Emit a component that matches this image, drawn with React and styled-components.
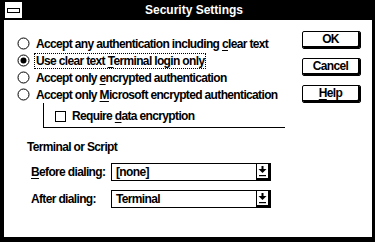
import React from 'react';
import styled, { createGlobalStyle } from 'styled-components';

const GlobalStyle = createGlobalStyle`
  html, body {
    margin: 0;
    padding: 0;
    background: #fff;
  }
  body {
    font-family: "Liberation Sans", Arial, sans-serif;
  }
`;

const radioOptions = [
  { id: 'any', before: 'Accept any authentication including ', key: 'c', after: 'lear text' },
  { id: 'clear', before: 'Use clear text ', key: 'T', after: 'erminal login only', checked: true, focused: true },
  { id: 'enc', before: 'Accept only ', key: 'e', after: 'ncrypted authentication' },
];

function Radio({ checked }) {
  return (
    <RadioIcon width="13" height="13" viewBox="0 0 13 13">
      <circle cx="6.5" cy="6.5" r="5.5" fill="#fff" stroke="#000" strokeWidth="1" />
      {checked && <circle cx="6.5" cy="6.5" r="3" fill="#000" />}
    </RadioIcon>
  );
}

function ComboArrow() {
  return (
    <svg width="9" height="11" viewBox="0 0 9 11">
      <rect x="3.5" y="0" width="2" height="3" fill="#000" />
      <polygon points="0.5,3 8.5,3 4.5,7" fill="#000" />
      <rect x="1" y="9" width="7" height="1.2" fill="#000" />
    </svg>
  );
}

function Combo({ value }) {
  return (
    <ComboBox>
      <ComboField>{value}</ComboField>
      <ComboButton>
        <ComboArrow />
      </ComboButton>
    </ComboBox>
  );
}

export default function App() {
  return (
    <>
      <GlobalStyle />
      <Window>
        <TitleBar>
          <SysBox>
            <SysBar />
          </SysBox>
          <Title>Security Settings</Title>
        </TitleBar>
        <Body>
          <LeftPane>
            {radioOptions.map(opt => (
              <RadioRow key={opt.id}>
                <Radio checked={opt.checked} />
                <Label $focused={opt.focused}>
                  {opt.before}
                  <u>{opt.key}</u>
                  {opt.after}
                </Label>
              </RadioRow>
            ))}
            <GroupHeader>
              <Radio />
              <Label>
                Accept only <u>M</u>icrosoft encrypted authentication
              </Label>
              <GroupLine />
            </GroupHeader>
            <GroupBox>
              <CheckRow>
                <CheckBox />
                <Label>
                  Require <u>d</u>ata encryption
                </Label>
              </CheckRow>
            </GroupBox>
            <SectionLabel>Terminal or Script</SectionLabel>
            <FieldRow>
              <FieldLabel>
                <u>B</u>efore dialing:
              </FieldLabel>
              <Combo value="[none]" />
            </FieldRow>
            <FieldRow>
              <FieldLabel>After dialing:</FieldLabel>
              <Combo value="Terminal" />
            </FieldRow>
          </LeftPane>
          <RightPane>
            <Button>OK</Button>
            <Button>Cancel</Button>
            <Button>
              <u>H</u>elp
            </Button>
          </RightPane>
        </Body>
      </Window>
    </>
  );
}

const Window = styled.div`
  width: 375px;
  height: 242px;
  box-sizing: border-box;
  display: flex;
  flex-direction: column;
  background: #fff;
  border-left: 4px solid #000;
  border-right: 3px solid #000;
  border-bottom: 5px solid #000;
  color: #000;
  font: bold 12px "Liberation Sans", Arial, sans-serif;
  letter-spacing: -0.65px;
`;

const TitleBar = styled.div`
  height: 20px;
  flex: 0 0 20px;
  display: flex;
  align-items: center;
  background: #000;
`;

const SysBox = styled.div`
  width: 17px;
  height: 16px;
  margin-left: 1px;
  display: flex;
  align-items: center;
  justify-content: center;
  background: #fff;
`;

const SysBar = styled.div`
  width: 11px;
  height: 3px;
  border: 1px solid #000;
  background: #fff;
`;

const Title = styled.div`
  flex: 1;
  text-align: center;
  color: #fff;
  font-size: 12px;
  letter-spacing: 0;
  padding-right: 6px;
`;

const Body = styled.div`
  flex: 1;
  display: flex;
`;

const LeftPane = styled.div`
  flex: 1;
  display: flex;
  flex-direction: column;
  padding: 15px 0 0 13px;
`;

const RadioRow = styled.div`
  height: 17px;
  display: flex;
  align-items: center;
  gap: 5px;
`;

const RadioIcon = styled.svg`
  flex: 0 0 13px;
  display: block;
`;

const Label = styled.span`
  white-space: nowrap;
  line-height: 14px;
  padding: 0 1px;
  outline: ${p => (p.$focused ? '1px dotted #000' : 'none')};

  u {
    text-decoration: underline;
    text-underline-offset: 2px;
  }
`;

const GroupHeader = styled(RadioRow)`
  width: 268px;
`;

const GroupLine = styled.div`
  flex: 1;
  height: 1px;
  margin-left: 3px;
  background: #000;
`;

const GroupBox = styled.div`
  width: 242px;
  height: 25px;
  margin-left: 26px;
  box-sizing: border-box;
  border-left: 1px solid #000;
  border-bottom: 1px solid #000;
  display: flex;
  align-items: center;
  padding: 2px 0 0 11px;
`;

const CheckRow = styled.div`
  display: flex;
  align-items: center;
  gap: 5px;
`;

const CheckBox = styled.div`
  width: 11px;
  height: 11px;
  box-sizing: border-box;
  border: 1px solid #000;
  background: #fff;
`;

const SectionLabel = styled.div`
  margin: 12px 0 0 10px;
  line-height: 14px;
`;

const FieldRow = styled.div`
  display: flex;
  align-items: center;
  height: 18px;
  margin: 9px 0 0 14px;
`;

const FieldLabel = styled.span`
  width: 80px;
  white-space: nowrap;

  u {
    text-underline-offset: 2px;
  }
`;

const ComboBox = styled.div`
  display: flex;
  width: 160px;
  height: 18px;
`;

const ComboField = styled.div`
  flex: 1;
  box-sizing: border-box;
  border: 1px solid #000;
  padding-left: 4px;
  line-height: 16px;
`;

const ComboButton = styled.div`
  width: 14px;
  box-sizing: border-box;
  border: 1px solid #000;
  border-left: 0;
  box-shadow: inset -2px -2px 0 #000;
  display: flex;
  align-items: center;
  justify-content: center;
  padding: 0 2px 2px 0;
`;

const RightPane = styled.div`
  width: 59px;
  margin-right: 11px;
  padding-top: 11px;
  display: flex;
  flex-direction: column;
  gap: 9px;
`;

const Button = styled.button`
  height: 18px;
  box-sizing: border-box;
  margin: 0;
  padding: 0 2px 2px 0;
  border: 1px solid #000;
  border-radius: 2px;
  box-shadow: inset -2px -2px 0 #000;
  background: #fff;
  color: #000;
  font: inherit;
  letter-spacing: inherit;
  line-height: 14px;

  u {
    text-underline-offset: 2px;
  }
`;
